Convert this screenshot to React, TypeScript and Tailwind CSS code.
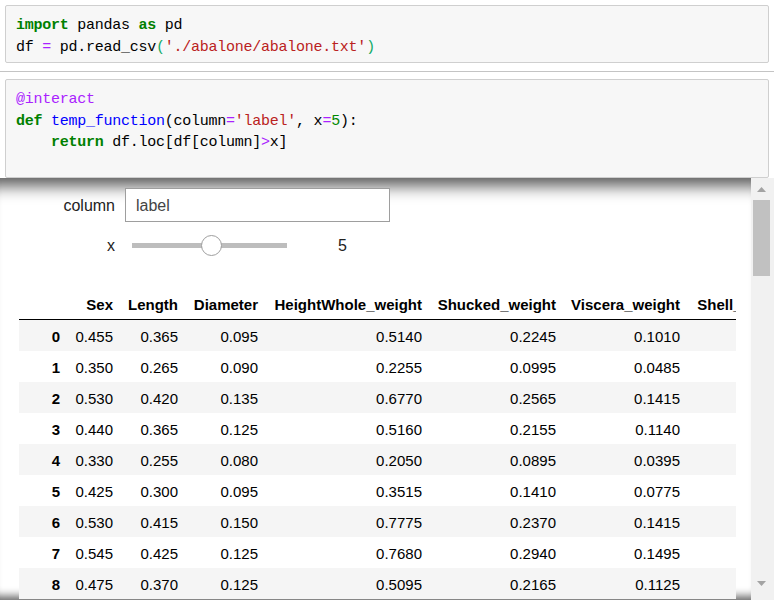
import type { ReactNode } from "react";

const rows = [
  ["0", "0.455", "0.365", "0.095", "0.5140", "0.2245", "0.1010", "0.150", "15"],
  ["1", "0.350", "0.265", "0.090", "0.2255", "0.0995", "0.0485", "0.070", "7"],
  ["2", "0.530", "0.420", "0.135", "0.6770", "0.2565", "0.1415", "0.210", "9"],
  ["3", "0.440", "0.365", "0.125", "0.5160", "0.2155", "0.1140", "0.155", "10"],
  ["4", "0.330", "0.255", "0.080", "0.2050", "0.0895", "0.0395", "0.055", "7"],
  ["5", "0.425", "0.300", "0.095", "0.3515", "0.1410", "0.0775", "0.120", "8"],
  ["6", "0.530", "0.415", "0.150", "0.7775", "0.2370", "0.1415", "0.330", "20"],
  ["7", "0.545", "0.425", "0.125", "0.7680", "0.2940", "0.1495", "0.260", "16"],
  ["8", "0.475", "0.370", "0.125", "0.5095", "0.2165", "0.1125", "0.165", "9"],
];

const headers = [
  "",
  "Sex",
  "Length",
  "Diameter",
  "HeightWhole_weight",
  "Shucked_weight",
  "Viscera_weight",
  "Shell_weight",
  "label",
];

// column grid shared by header and body rows
const cols = "grid grid-cols-[49px_53px_65px_80px_164px_134px_124px_109px_60px]";

/* ─── code cell tokens ─── */

const Kw = ({ children }: { children: ReactNode }) => (
  <span className="font-bold text-[#008000]">{children}</span>
);
const Op = ({ children }: { children: ReactNode }) => (
  <span className="text-[#aa22ff]">{children}</span>
);
const Str = ({ children }: { children: ReactNode }) => (
  <span className="text-[#ba2121]">{children}</span>
);
const Br = ({ children }: { children: ReactNode }) => (
  <span className="text-[#11aa66]">{children}</span>
);

function CodeCell({ children, className = "" }: { children: ReactNode; className?: string }) {
  return (
    <div
      className={`mx-[5px] rounded-[2px] border border-[#cfcfcf] bg-[#f7f7f7] pl-[10px] pt-[9px] font-['Liberation_Mono',monospace] text-[15px] leading-[21.5px] tracking-[-0.25px] text-black whitespace-pre ${className}`}
    >
      {children}
    </div>
  );
}

/* ─── fake scrollbar of the output area ─── */

function Scrollbar() {
  return (
    <div className="flex w-[23px] flex-col bg-[#f1f1f1]">
      <div className="flex h-[22px] items-center pl-[6px]">
        <svg width="9" height="5" viewBox="0 0 9 5">
          <polygon points="0,5 4.5,0 9,5" fill="#a3a3a3" />
        </svg>
      </div>
      <div className="ml-[2px] h-[76px] w-[17px] bg-[#c1c1c1]" />
      <div className="flex-1" />
      <div className="flex h-[26px] items-start pl-[6px] pt-[7px]">
        <svg width="9" height="5" viewBox="0 0 9 5">
          <polygon points="0,0 9,0 4.5,5" fill="#a3a3a3" />
        </svg>
      </div>
    </div>
  );
}

export default function App() {
  return (
    <div className="h-[600px] w-[774px] overflow-hidden bg-white pt-[5px] font-['Liberation_Sans',Arial,sans-serif]">
      <CodeCell className="h-[58px]">
        <div>
          <Kw>import</Kw> pandas <Kw>as</Kw> pd
        </div>
        <div>
          df <Op>=</Op> pd.read_csv<Br>(</Br>
          <Str>'./abalone/abalone.txt'</Str>
          <Br>)</Br>
        </div>
      </CodeCell>

      <div className="mt-[8px] h-px bg-[#c4c4c4]" />

      <CodeCell className="mt-[7px] h-[99px]">
        <div>
          <Op>@interact</Op>
        </div>
        <div>
          <Kw>def</Kw> <span className="text-[#0000ff]">temp_function</span>(column<Op>=</Op>
          <Str>'label'</Str>, x<Op>=</Op>
          <span className="text-[#008800]">5</span>):
        </div>
        <div>
          {"    "}
          <Kw>return</Kw> df.loc[df[column]<Op>&gt;</Op>x]
        </div>
        <div> </div>
      </CodeCell>

      {/* output area */}
      <div className="flex h-[422px]">
        <div className="min-w-0 flex-1 overflow-hidden shadow-[inset_0_24px_16px_-16px_rgba(0,0,0,0.65),inset_0_-12px_8px_-8px_rgba(0,0,0,0.6)]">
          {/* widgets */}
          <div className="pt-[10px] text-[16px] text-[#222]">
            <div className="flex items-center">
              <div className="w-[115px] pt-[2px] text-right">column</div>
              <div className="ml-[10px] flex h-[34px] w-[265px] items-center border border-[#9e9e9e] bg-white pl-[10px] pt-[2px] text-[#444]">
                label
              </div>
            </div>
            <div className="mt-[7px] flex h-[32px] items-center">
              <div className="w-[115px] pt-[2px] text-right">x</div>
              <div className="relative ml-[17px] h-[5px] w-[155px] bg-[#bdbdbd]">
                <div className="absolute left-[69px] top-[-8px] h-[21px] w-[21px] rounded-full border border-[#9e9e9e] bg-white" />
              </div>
              <div className="ml-[51px] pt-[2px]">5</div>
            </div>
          </div>

          {/* dataframe */}
          <div className="ml-[19px] mt-[27px] w-[717px] overflow-hidden text-[15px] text-black">
            <div className={`${cols} h-[32px] border-b border-black font-bold`}>
              {headers.map((h, i) => (
                <div key={i} className="flex items-center justify-end whitespace-nowrap pr-[8px] pt-[4px]">
                  {h}
                </div>
              ))}
            </div>
            {rows.map((r, ri) => (
              <div
                key={ri}
                className={`${cols} h-[31px] ${ri % 2 === 0 ? "bg-[#f5f5f5]" : "bg-white"}`}
              >
                {r.map((v, ci) => (
                  <div
                    key={ci}
                    className={`flex items-center justify-end whitespace-nowrap pr-[8px] pt-[3px] ${
                      ci === 0 ? "font-bold" : ""
                    }`}
                  >
                    {v}
                  </div>
                ))}
              </div>
            ))}
          </div>
        </div>
        <Scrollbar />
      </div>
    </div>
  );
}
